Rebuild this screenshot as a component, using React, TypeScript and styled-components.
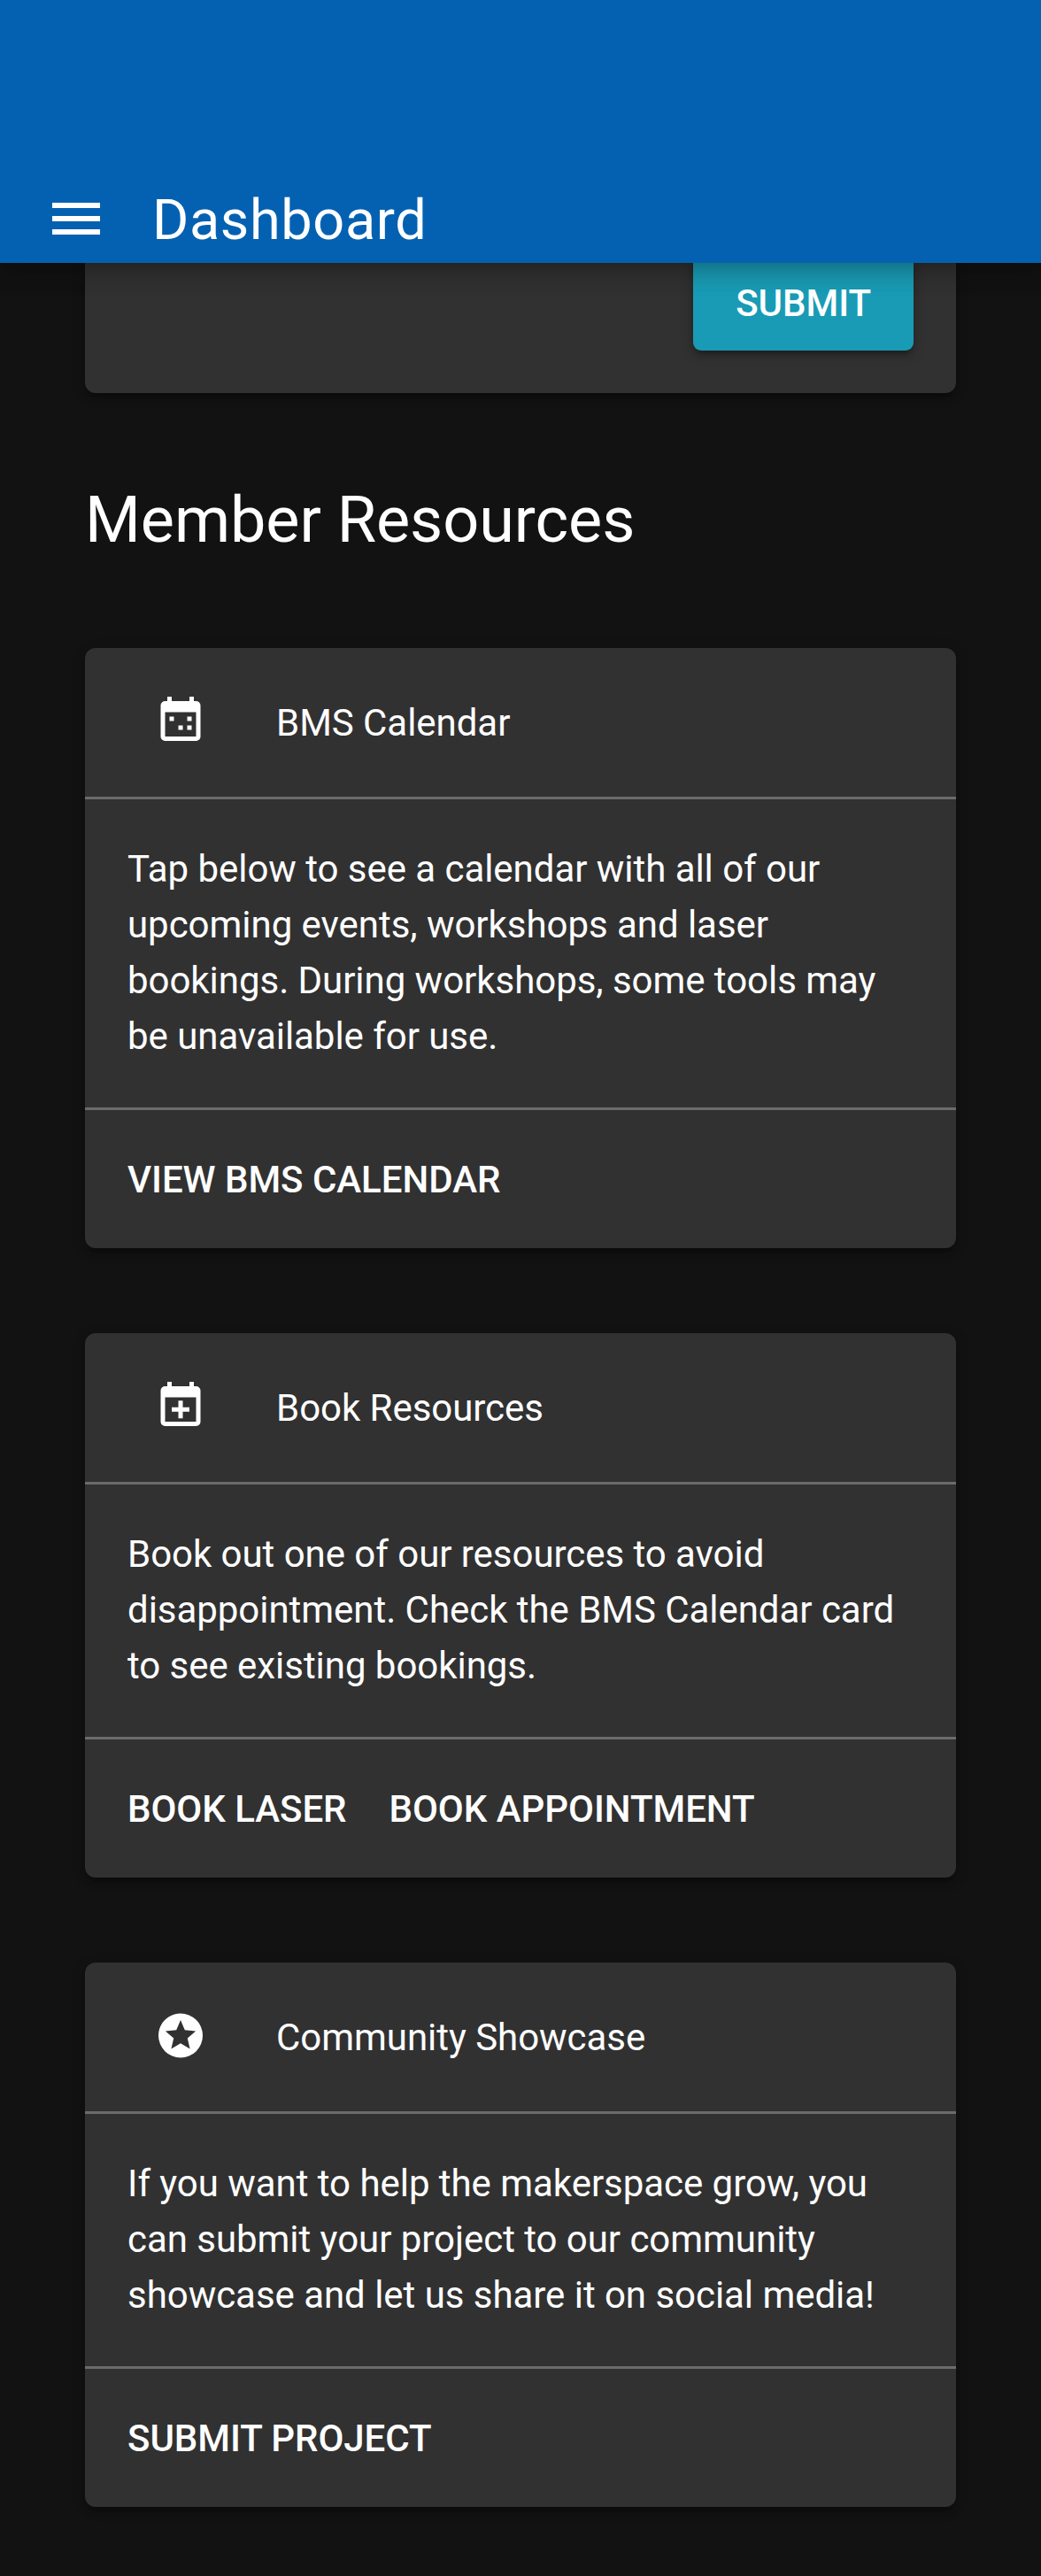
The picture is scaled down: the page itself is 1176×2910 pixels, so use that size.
import React from "react";
import styled, { createGlobalStyle } from "styled-components";

const GlobalStyle = createGlobalStyle`
  * { box-sizing: border-box; }
  html, body { margin: 0; padding: 0; background: #121212; }
  body {
    font-family: Roboto, "Liberation Sans", sans-serif;
    font-size: 42px;
    line-height: 63px;
    letter-spacing: -0.04px;
    color: #fff;
  }
`;

const Screen = styled.div`
  height: 2910px;
  overflow: hidden;
  display: flex;
  flex-direction: column;
  background: #121212;
`;

const AppBar = styled.header`
  flex: none;
  z-index: 1;
  position: relative;
  height: 297px;
  padding: 0 50px 14px;
  display: flex;
  align-items: flex-end;
  background: #0461b1;
  box-shadow: 0 0 30px 6px rgba(0, 0, 0, 0.2), 0 0 30px rgba(0, 0, 0, 0.24);
`;

const MenuButton = styled.button`
  width: 72px;
  height: 72px;
  padding: 0;
  border: 0;
  background: none;
  color: inherit;
  display: flex;
`;

const AppTitle = styled.h1`
  margin: 0 0 0 50px;
  font-size: 63px;
  line-height: 69px;
  font-weight: 400;
  letter-spacing: 0.01em;
`;

const Content = styled.main`
  flex: 1;
  padding: 0 96px;
  display: flex;
  flex-direction: column;
`;

const elevation = `
  box-shadow: 0 3px 15px rgba(0, 0, 0, 0.2), 0 6px 6px rgba(0, 0, 0, 0.14),
    0 9px 3px -6px rgba(0, 0, 0, 0.12);
`;

const CardBox = styled.section<{ $continued?: boolean }>`
  flex: none;
  background: #313131;
  border-radius: ${(p) => (p.$continued ? "0 0 12px 12px" : "12px")};
  ${elevation}
`;

const FormFooter = styled.div`
  height: 147px;
  padding: 0 48px 48px;
  display: flex;
  justify-content: flex-end;
  align-items: flex-end;
`;

const SubmitButton = styled.button`
  height: 108px;
  padding: 0 48px;
  border: 0;
  border-radius: 9px;
  background: #199bb5;
  color: #fff;
  font: 500 42px/63px Roboto, "Liberation Sans", sans-serif;
  letter-spacing: -0.04px;
  text-transform: uppercase;
  ${elevation}
`;

const SectionTitle = styled.h2`
  margin: 96px 0 97px;
  font-size: 72px;
  line-height: 95px;
  font-weight: 400;
  letter-spacing: -0.06px;
`;

const CardList = styled.div`
  display: flex;
  flex-direction: column;
  gap: 96px;
`;

const CardHeader = styled.div`
  height: 171px;
  padding: 0 48px 0 78px;
  display: flex;
  align-items: center;
  gap: 78px;
  border-bottom: 3px solid #6b6b6b;
`;

const IconSlot = styled.span`
  width: 60px;
  height: 61px;
  margin-bottom: 3px;
  display: flex;
`;

const CardBody = styled.p`
  margin: 0;
  padding: 47px 48px 49px;
`;

const CardActions = styled.div`
  height: 159px;
  padding: 0 48px;
  border-top: 3px solid #6b6b6b;
  display: flex;
  align-items: center;
  gap: 48px;
`;

const TextButton = styled.button`
  padding: 0;
  border: 0;
  background: none;
  color: inherit;
  font: 500 42px/63px Roboto, "Liberation Sans", sans-serif;
  letter-spacing: -0.04px;
  text-transform: uppercase;
  white-space: nowrap;
`;

const Svg = styled.svg`
  width: 100%;
  height: 100%;
  fill: currentColor;
`;

const Icon = ({ path }: { path: string }) => (
  <Svg viewBox="0 0 24 24" aria-hidden>
    <path fillRule="evenodd" d={path} />
  </Svg>
);

const calendarFrame =
  "M8 1V3H16V1H18V3H19A2 2 0 0 1 21 5V19A2 2 0 0 1 19 21H5A2 2 0 0 1 3 19V5A2 2 0 0 1 5 3H6V1ZM5 8V19H19V8Z";

const icons = {
  menu: "M3 6H21V8H3ZM3 11H21V13H3ZM3 16H21V18H3Z",
  calendar: calendarFrame + "M7 10H9V12H7ZM15 10H17V12H15ZM11 14H13V16H11ZM15 14H17V16H15Z",
  calendarPlus: calendarFrame + "M11 9.5H13V12.5H16V14.5H13V17.5H11V14.5H8V12.5H11Z",
  star:
    "M16.23 18L12 15.45L7.77 18L8.89 13.19L5.16 9.96L10.08 9.54L12 5L13.92 9.53L18.84 9.95L15.11 13.18L16.23 18M12 2C6.47 2 2 6.5 2 12A10 10 0 0 0 12 22A10 10 0 0 0 22 12A10 10 0 0 0 12 2Z",
};

const cards = [
  {
    icon: icons.calendar,
    title: "BMS Calendar",
    body: "Tap below to see a calendar with all of our upcoming events, workshops and laser bookings. During workshops, some tools may be unavailable for use.",
    actions: ["View BMS Calendar"],
  },
  {
    icon: icons.calendarPlus,
    title: "Book Resources",
    body: "Book out one of our resources to avoid disappointment. Check the BMS Calendar card to see existing bookings.",
    actions: ["Book Laser", "Book Appointment"],
  },
  {
    icon: icons.star,
    title: "Community Showcase",
    body: "If you want to help the makerspace grow, you can submit your project to our community showcase and let us share it on social media!",
    actions: ["Submit Project"],
  },
];

export default function App() {
  return (
    <>
      <GlobalStyle />
      <Screen>
        <AppBar>
          <MenuButton aria-label="Menu">
            <Icon path={icons.menu} />
          </MenuButton>
          <AppTitle>Dashboard</AppTitle>
        </AppBar>
        <Content>
          <CardBox $continued>
            <FormFooter>
              <SubmitButton>Submit</SubmitButton>
            </FormFooter>
          </CardBox>
          <SectionTitle>Member Resources</SectionTitle>
          <CardList>
            {cards.map((card) => (
              <CardBox key={card.title}>
                <CardHeader>
                  <IconSlot>
                    <Icon path={card.icon} />
                  </IconSlot>
                  <span>{card.title}</span>
                </CardHeader>
                <CardBody>{card.body}</CardBody>
                <CardActions>
                  {card.actions.map((action) => (
                    <TextButton key={action}>{action}</TextButton>
                  ))}
                </CardActions>
              </CardBox>
            ))}
          </CardList>
        </Content>
      </Screen>
    </>
  );
}
